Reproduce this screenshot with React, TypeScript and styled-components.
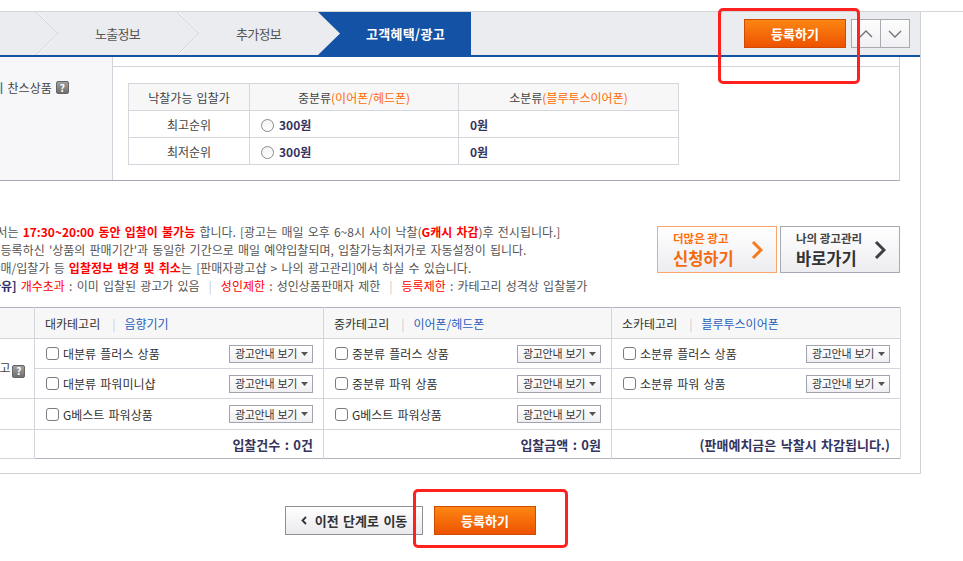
import React from "react";
import styled, { createGlobalStyle } from "styled-components";

const GlobalStyle = createGlobalStyle`
  html, body {
    margin: 0;
    padding: 0;
    background: #fff;
  }
  body {
    font-family: "Noto Sans CJK KR", "Noto Sans", "Liberation Sans", sans-serif;
    font-size: 12px;
    color: #555;
    letter-spacing: 0;
    word-spacing: 1.5px;
  }
  * {
    box-sizing: border-box;
  }
`;

// Data
const steps = ["기본정보", "노출정보", "추가정보"];

const catColumns = [
  {
    head: "대카테고리",
    link: "음향기기",
    items: ["대분류 플러스 상품", "대분류 파워미니샵", "G베스트 파워상품"],
    foot: "입찰건수 : 0건",
  },
  {
    head: "중카테고리",
    link: "이어폰/헤드폰",
    items: ["중분류 플러스 상품", "중분류 파워 상품", "G베스트 파워상품"],
    foot: "입찰금액 : 0원",
  },
  {
    head: "소카테고리",
    link: "블루투스이어폰",
    items: ["소분류 플러스 상품", "소분류 파워 상품", ""],
    foot: "(판매예치금은 낙찰시 차감됩니다.)",
  },
];

// Icons
const Chevron = ({ nextActive }: { nextActive?: boolean }) => (
  <ChevronSvg viewBox="0 0 22 43" preserveAspectRatio="none">
    {nextActive ? (
      <polygon points="0,0 22,0 22,43 0,43 22,21.5" fill="#1352a4" />
    ) : (
      <>
        <polyline points="1,0 23,21.5 1,43" fill="none" stroke="#fff" strokeWidth="1" />
        <polyline points="0,0 22,21.5 0,43" fill="none" stroke="#cfd0d6" strokeWidth="1" />
      </>
    )}
  </ChevronSvg>
);

const ArrowIcon = ({ up }: { up?: boolean }) => (
  <svg width="14" height="8" viewBox="0 0 14 8">
    <polyline
      points={up ? "1,7 7,1 13,7" : "1,1 7,7 13,1"}
      fill="none"
      stroke="#6f6f76"
      strokeWidth="1.3"
    />
  </svg>
);

const BigArrow = ({ color }: { color: string }) => (
  <svg width="12" height="20" viewBox="0 0 12 20">
    <polyline points="2,2 10,10 2,18" fill="none" stroke={color} strokeWidth="3" />
  </svg>
);

const Caret = () => (
  <svg width="7" height="4" viewBox="0 0 7 4">
    <polygon points="0,0 7,0 3.5,4" fill="#555" />
  </svg>
);

const BackArrow = () => (
  <svg width="6" height="9" viewBox="0 0 6 9">
    <polyline points="5,1 1.5,4.5 5,8" fill="none" stroke="#333" strokeWidth="1.8" />
  </svg>
);

const App = () => {
  return (
    <Page>
      <GlobalStyle />
      <TopRule />
      <Frame>
        <StepBar>
          {steps.map((label, i) => (
            <Step key={label}>
              {label}
              <Chevron nextActive={i === steps.length - 1} />
            </Step>
          ))}
          <Step $active>고객혜택/광고</Step>
          <StepTools>
            <OrangeButton>등록하기</OrangeButton>
            <ArrowGroup>
              <ArrowButton>
                <ArrowIcon up />
              </ArrowButton>
              <ArrowButton>
                <ArrowIcon />
              </ArrowButton>
            </ArrowGroup>
          </StepTools>
        </StepBar>

        <BidBox>
          <BidLabel $top />
          <BidCell $top />
          <BidLabel>
            카테고리 세 찬스상품<HelpIcon>?</HelpIcon>
          </BidLabel>
          <BidCell>
            <BidTable>
              <colgroup>
                <col style={{ width: 121 }} />
                <col style={{ width: 209 }} />
                <col style={{ width: 220 }} />
              </colgroup>
              <thead>
                <tr>
                  <BidHead>낙찰가능 입찰가</BidHead>
                  <BidHead>
                    중분류<Orange>(이어폰/헤드폰)</Orange>
                  </BidHead>
                  <BidHead>
                    소분류<Orange>(블루투스이어폰)</Orange>
                  </BidHead>
                </tr>
              </thead>
              <tbody>
                {["최고순위", "최저순위"].map((rank) => (
                  <tr key={rank}>
                    <BidData $center>{rank}</BidData>
                    <BidData>
                      <Radio />
                      <Price>300원</Price>
                    </BidData>
                    <BidData>
                      <Price>0원</Price>
                    </BidData>
                  </tr>
                ))}
              </tbody>
            </BidTable>
          </BidCell>
        </BidBox>

        <NoticeRow>
          <Notice>
            <NoticeLine>
              ※ 광고입찰에서는 <Red $bold>17:30~20:00 동안 입찰이 불가능</Red> 합니다. [광고는 매일 오후
              6~8시 사이 낙찰(<Red $bold>G캐시 차감</Red>)후 전시됩니다.]
            </NoticeLine>
            <NoticeLine>
              ※ 판매상품을 등록하신 '상품의 판매기간'과 동일한 기간으로 매일 예약입찰되며,
              입찰가능최저가로 자동설정이 됩니다.
            </NoticeLine>
            <NoticeLine>
              ※ 등록상품 판매/입찰가 등 <Red $bold>입찰정보 변경 및 취소</Red>는 [판매자광고샵 &gt; 나의
              광고관리]에서 하실 수 있습니다.
            </NoticeLine>
            <NoticeLine>
              <Navy>※[입찰불가 사유]</Navy> <Red>개수초과</Red> : 이미 입찰된 광고가 있음
              <Sep>|</Sep>
              <Red>성인제한</Red> : 성인상품판매자 제한
              <Sep>|</Sep>
              <Red>등록제한</Red> : 카테고리 성격상 입찰불가
            </NoticeLine>
          </Notice>
          <AdButtons>
            <AdButton $tone="orange">
              <AdText>
                <AdSmall $tone="orange">더많은 광고</AdSmall>
                <AdBig $tone="orange">신청하기</AdBig>
              </AdText>
              <BigArrow color="#f47a1c" />
            </AdButton>
            <AdButton $tone="gray">
              <AdText>
                <AdSmall $tone="gray">나의 광고관리</AdSmall>
                <AdBig $tone="gray">바로가기</AdBig>
              </AdText>
              <BigArrow color="#3f3f45" />
            </AdButton>
          </AdButtons>
        </NoticeRow>

        <CatTable>
          <colgroup>
            <col style={{ width: 114 }} />
            <col style={{ width: 289 }} />
            <col style={{ width: 288 }} />
            <col style={{ width: 289 }} />
          </colgroup>
          <thead>
            <tr>
              <CatHead />
              {catColumns.map((c) => (
                <CatHead key={c.head}>
                  {c.head}
                  <Divider>|</Divider>
                  <CatLink>{c.link}</CatLink>
                </CatHead>
              ))}
            </tr>
          </thead>
          <tbody>
            {[0, 1, 2].map((row) => (
              <tr key={row}>
                {row === 0 && (
                  <CatLabel rowSpan={2}>
                    카테고리 광고<HelpIcon>?</HelpIcon>
                  </CatLabel>
                )}
                {row === 2 && <CatLabel />}
                {catColumns.map((c) => (
                  <CatCell key={c.head} $tall={row === 2}>
                    {c.items[row] && (
                      <CellInner>
                        <CheckWrap>
                          <Check />
                          {c.items[row]}
                        </CheckWrap>
                        <DropButton>
                          광고안내 보기 <Caret />
                        </DropButton>
                      </CellInner>
                    )}
                  </CatCell>
                ))}
              </tr>
            ))}
            <tr>
              <CatLabel />
              {catColumns.map((c) => (
                <CatFoot key={c.head}>{c.foot}</CatFoot>
              ))}
            </tr>
          </tbody>
        </CatTable>
      </Frame>

      <BottomBar>
        <PrevButton>
          <BackArrow />
          이전 단계로 이동
        </PrevButton>
        <OrangeButton>등록하기</OrangeButton>
      </BottomBar>

      <Annotation $x={718} $y={8} $w={142} $h={76} />
      <Annotation $x={413} $y={489} $w={155} $h={59} />
    </Page>
  );
};

// Styles
const Page = styled.div`
  position: relative;
  width: 963px;
  height: 561px;
  overflow: hidden;
  background: #fff;
`;

const TopRule = styled.div`
  height: 12px;
  border-bottom: 1px solid #d4d5d9;
`;

const Frame = styled.div`
  margin-left: -100px;
  width: 1021px;
  border-right: 1px solid #cfd0d8;
  border-bottom: 1px solid #cfd0d8;
  padding-bottom: 14px;
`;

const StepBar = styled.div`
  display: flex;
  height: 45px;
  padding-left: 17px;
  background: #ebecef;
  border-bottom: 2px solid #1352a4;
`;

const Step = styled.div<{ $active?: boolean }>`
  position: relative;
  flex: none;
  width: ${({ $active }) => ($active ? 131 : 141)}px;
  display: flex;
  align-items: center;
  justify-content: center;
  padding-right: ${({ $active }) => ($active ? 0 : 22)}px;
  background: ${({ $active }) => ($active ? "#1352a4" : "transparent")};
  color: ${({ $active }) => ($active ? "#fff" : "#555")};
  font-size: 13px;
  font-weight: ${({ $active }) => ($active ? 700 : 400)};
  letter-spacing: ${({ $active }) => ($active ? 0.3 : -0.7)}px;
`;

const ChevronSvg = styled.svg`
  position: absolute;
  top: 0;
  right: 0;
  width: 22px;
  height: 43px;
`;

const StepTools = styled.div`
  margin-left: auto;
  display: flex;
  align-items: center;
  gap: 5px;
  padding-right: 10px;
`;

const OrangeButton = styled.button`
  width: 102px;
  height: 29px;
  padding: 0;
  border: 1px solid #cf4b02;
  background: linear-gradient(#fc8613, #ee5200);
  color: #fff;
  font-family: inherit;
  font-size: 13px;
  font-weight: 700;
  letter-spacing: 0;
  cursor: pointer;
`;

const ArrowGroup = styled.div`
  display: flex;
`;

const ArrowButton = styled.button`
  width: 30px;
  height: 29px;
  padding: 0;
  display: flex;
  align-items: center;
  justify-content: center;
  border: 1px solid #a9a9b1;
  background: linear-gradient(#fdfdfd, #f0f0f3);
  cursor: pointer;

  & + & {
    margin-left: -1px;
  }
`;

const BidBox = styled.div`
  margin: 0 20px;
  display: grid;
  grid-template-columns: 193px 1fr;
  grid-template-rows: 10px auto;
  border-right: 1px solid #cdcdd7;
  border-bottom: 1px solid #a9a9b6;
`;

const BidLabel = styled.div<{ $top?: boolean }>`
  background: #f7f7f9;
  border-right: 1px solid #d3d3dc;
  border-bottom: ${({ $top }) => ($top ? "1px solid #d3d3dc" : "none")};
  padding: 13px 0 0 24px;
  color: #444;
  line-height: 16px;
  white-space: nowrap;
  display: flex;
  align-items: flex-start;
  gap: 2px;
`;

const BidCell = styled.div<{ $top?: boolean }>`
  border-bottom: ${({ $top }) => ($top ? "1px solid #d3d3dc" : "none")};
  padding: ${({ $top }) => ($top ? "0" : "16px 0 15px 15px")};
`;

const HelpIcon = styled.span`
  display: inline-flex;
  align-items: center;
  justify-content: center;
  width: 13px;
  height: 13px;
  margin: 1px 0 0 2px;
  border: 1px solid #666;
  border-radius: 2px;
  background: linear-gradient(#a0a0a0, #707070);
  color: #fff;
  font-size: 10px;
  font-weight: 700;
  line-height: 1;
`;

const BidTable = styled.table`
  width: 550px;
  table-layout: fixed;
  border-collapse: collapse;
  border: 1px solid #c9c9d4;
`;

const BidHead = styled.th`
  height: 27px;
  padding: 0;
  background: #f7f7f7;
  border: 1px solid #d6d6de;
  color: #444;
  font-weight: 400;
  text-align: center;
`;

const Orange = styled.span`
  color: #ff6a00;
`;

const BidData = styled.td<{ $center?: boolean }>`
  height: 27px;
  padding: 0 0 0 ${({ $center }) => ($center ? 0 : 11)}px;
  border: 1px solid #d6d6de;
  color: #444;
  text-align: ${({ $center }) => ($center ? "center" : "left")};
  white-space: nowrap;
`;

const Radio = styled.span`
  display: inline-block;
  width: 13px;
  height: 13px;
  margin-right: 5px;
  vertical-align: -2px;
  border: 1px solid #8a8a8f;
  border-radius: 50%;
  background: linear-gradient(#f3f3f3, #fff);
`;

const Price = styled.b`
  color: #343460;
  font-weight: 700;
`;

const NoticeRow = styled.div`
  margin: 0 20px;
  padding-top: 42px;
  display: flex;
  justify-content: space-between;
  align-items: flex-start;
`;

const Notice = styled.div`
  padding-left: 5px;
  white-space: nowrap;
`;

const NoticeLine = styled.p`
  margin: 0;
  line-height: 18px;
  color: #555;
`;

const Red = styled.span<{ $bold?: boolean }>`
  color: #ff0000;
  font-weight: ${({ $bold }) => ($bold ? 700 : 400)};
`;

const Navy = styled.b`
  color: #2f2f6a;
`;

const Sep = styled.span`
  margin: 0 9px;
  color: #c8c8c8;
`;

const AdButtons = styled.div`
  margin-top: 3px;
  display: flex;
  gap: 3px;
`;

const AdButton = styled.a<{ $tone: "orange" | "gray" }>`
  width: 120px;
  height: 47px;
  padding: 0 13px 0 15px;
  display: flex;
  align-items: center;
  justify-content: space-between;
  border: 1px solid ${({ $tone }) => ($tone === "orange" ? "#f9a56c" : "#a9a9b3")};
  background: linear-gradient(#ffffff, #ededf1);
  cursor: pointer;
`;

const AdText = styled.div`
  display: flex;
  flex-direction: column;
  gap: 3px;
`;

const AdSmall = styled.span<{ $tone: "orange" | "gray" }>`
  font-size: 11.5px;
  font-weight: 700;
  line-height: 14px;
  word-spacing: 0;
  color: ${({ $tone }) => ($tone === "orange" ? "#ff6e10" : "#444")};
`;

const AdBig = styled.span<{ $tone: "orange" | "gray" }>`
  font-size: 16.5px;
  font-weight: 700;
  line-height: 20px;
  color: ${({ $tone }) => ($tone === "orange" ? "#f26a0c" : "#333")};
`;

const CatTable = styled.table`
  margin: 12px 20px 0;
  width: 980px;
  table-layout: fixed;
  border-collapse: collapse;
  border-top: 1px solid #b3b3bf;
  border-bottom: 1px solid #b3b3bf;
  border-right: 1px solid #c6c6d0;
`;

const CatHead = styled.th`
  height: 31px;
  padding: 0 0 0 10px;
  background: #f7f7f7;
  border: 1px solid #d4d4dc;
  border-top: none;
  color: #333;
  font-weight: 400;
  text-align: left;
  white-space: nowrap;
`;

const Divider = styled.span`
  margin: 0 9px 0 12px;
  color: #cdcdd5;
`;

const CatLink = styled.span`
  color: #1f5fc0;
`;

const CatLabel = styled.td`
  padding: 0 0 0 19px;
  border: 1px solid #d4d4dc;
  color: #444;
  white-space: nowrap;

  & > span {
    vertical-align: -2px;
  }
`;

const CatCell = styled.td<{ $tall?: boolean }>`
  height: ${({ $tall }) => ($tall ? 31 : 30)}px;
  padding: 0 10px 0 11px;
  border: 1px solid #d4d4dc;
`;

const CellInner = styled.div`
  display: flex;
  align-items: center;
  justify-content: space-between;
`;

const CheckWrap = styled.label`
  display: flex;
  align-items: center;
  gap: 4px;
  color: #333;
  white-space: nowrap;
`;

const Check = styled.span`
  width: 13px;
  height: 13px;
  border: 1px solid #7c7c80;
  border-radius: 3px;
  background: #fff;
`;

const DropButton = styled.button`
  width: 84px;
  height: 18px;
  padding: 0 0 0 1px;
  display: inline-flex;
  align-items: center;
  justify-content: center;
  gap: 4px;
  border: 1px solid #a3a3ad;
  background: linear-gradient(#ffffff, #efeff3);
  color: #333;
  font-family: inherit;
  font-size: 11px;
  letter-spacing: -0.3px;
  word-spacing: 1px;
  line-height: 1;
  cursor: pointer;
`;

const CatFoot = styled.td`
  height: 29px;
  padding: 0 10px 0 0;
  border: 1px solid #d4d4dc;
  border-bottom: none;
  text-align: right;
  color: #34345c;
  font-size: 13px;
  font-weight: 700;
  white-space: nowrap;
`;

const BottomBar = styled.div`
  margin: 32px 0 0 -100px;
  width: 1021px;
  display: flex;
  justify-content: center;
  gap: 11px;
`;

const PrevButton = styled.button`
  width: 138px;
  height: 29px;
  padding: 0;
  display: flex;
  align-items: center;
  justify-content: center;
  gap: 8px;
  border: 1px solid #8f8f96;
  background: linear-gradient(#ffffff, #eaeaee);
  color: #333;
  font-family: inherit;
  font-size: 13px;
  font-weight: 700;
  letter-spacing: 0;
  word-spacing: 1.5px;
  cursor: pointer;
`;

const Annotation = styled.div<{ $x: number; $y: number; $w: number; $h: number }>`
  position: absolute;
  left: ${({ $x }) => $x}px;
  top: ${({ $y }) => $y}px;
  width: ${({ $w }) => $w}px;
  height: ${({ $h }) => $h}px;
  border: 3px solid #ff2020;
  border-radius: 5px;
  pointer-events: none;
`;

// Exports
export default App;
